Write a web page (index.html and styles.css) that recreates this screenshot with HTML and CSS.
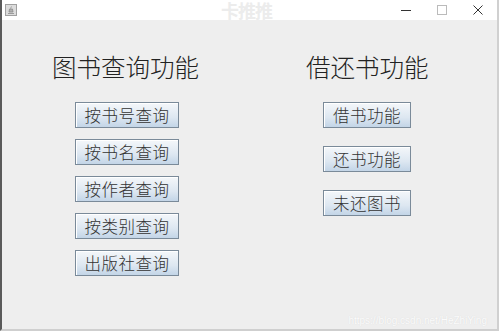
FILE: index.html
```html
<!DOCTYPE html>
<html lang="zh-CN">
<head>
    <meta charset="UTF-8">
    <title>图书管理</title>
    <link rel="stylesheet" href="styles.css">
</head>
<body>
    <div class="window">
        <!-- Title bar -->
        <div class="titlebar">
            <span class="app-icon">
                <svg width="12" height="12" viewBox="0 0 12 12">
                    <rect x="0.5" y="0.5" width="11" height="11" fill="#dcdcdc" stroke="#a0a0a0"/>
                    <path d="M3 9.5h6M4 8h4l-0.5-3h-3z" stroke="#8a8a8a" fill="#b0b0b0" stroke-width="0.8"/>
                    <path d="M5.5 4.5c0-1 1-1 1-2" stroke="#8a8a8a" fill="none" stroke-width="0.8"/>
                </svg>
            </span>
            <span class="mark">卡推推</span>
            <div class="controls">
                <span class="ctl">
                    <svg width="10" height="10" viewBox="0 0 10 10"><path d="M0 5.5h10" stroke="#333" stroke-width="1"/></svg>
                </span>
                <span class="ctl">
                    <svg width="10" height="10" viewBox="0 0 10 10"><rect x="0.5" y="0.5" width="9" height="9" fill="none" stroke="#bbb"/></svg>
                </span>
                <span class="ctl">
                    <svg width="10" height="10" viewBox="0 0 10 10"><path d="M0.5 0.5l9 9M9.5 0.5l-9 9" stroke="#333" stroke-width="1"/></svg>
                </span>
            </div>
        </div>

        <!-- Content -->
        <div class="content">
            <section class="panel panel-query">
                <h2>图书查询功能</h2>
                <div class="btn-list">
                    <button class="btn">按书号查询</button>
                    <button class="btn">按书名查询</button>
                    <button class="btn">按作者查询</button>
                    <button class="btn">按类别查询</button>
                    <button class="btn">出版社查询</button>
                </div>
            </section>
            <section class="panel panel-borrow">
                <h2>借还书功能</h2>
                <div class="btn-list">
                    <button class="btn">借书功能</button>
                    <button class="btn">还书功能</button>
                    <button class="btn">未还图书</button>
                </div>
            </section>
            <span class="url-mark">https://blog.csdn.net/HeZhiYing</span>
        </div>
    </div>
</body>
</html>
```

FILE: styles.css
```css
* {
    margin: 0;
    padding: 0;
    box-sizing: border-box;
}
body {
    font-family: "Noto Sans CJK SC", "Noto Sans", sans-serif;
    background-color: #eeeeee;
    width: 499px;
    height: 331px;
    overflow: hidden;
}

.window {
    width: 499px;
    height: 331px;
    display: flex;
    flex-direction: column;
    border-left: 2px solid #5a5a5a;
    border-right: 2px solid #d0d0d0;
    border-bottom: 2px solid #cfcfcf;
    background-color: #eeeeee;
}

/* Title bar */
.titlebar {
    height: 20px;
    background-color: #ffffff;
    display: flex;
    align-items: center;
    position: relative;
}
.app-icon {
    display: flex;
    margin-left: 3px;
}
.mark {
    position: absolute;
    left: 219px;
    top: 1px;
    font-size: 18px;
    line-height: 18px;
    font-weight: 700;
    color: #ececec;
    letter-spacing: -1px;
}
.controls {
    margin-left: auto;
    display: flex;
    gap: 26px;
    margin-right: 14px;
}
.ctl {
    display: flex;
    width: 10px;
    height: 10px;
}

/* Content */
.content {
    flex: 1;
    display: grid;
    grid-template-columns: 304px 1fr;
    position: relative;
}
.panel h2 {
    font-size: 24.5px;
    font-weight: 300;
    line-height: 30px;
    color: #222;
    margin-top: 32px;
}
.panel-query {
    padding-left: 50px;
}

.btn-list {
    display: flex;
    flex-direction: column;
}
.panel-query .btn-list {
    margin-top: 20px;
    margin-left: 23px;
    gap: 11px;
}
.panel-borrow .btn-list {
    margin-top: 20px;
    margin-left: 17px;
    gap: 18px;
}

.btn {
    height: 26px;
    font-family: "Noto Sans CJK SC", sans-serif;
    font-size: 16.5px;
    font-weight: 300;
    color: #333;
    border: 1px solid #7a8a99;
    box-shadow: inset 1px 1px 0 #ffffff;
    background: linear-gradient(#f4f7fa, #dde7f1 60%, #c3d5e7);
    line-height: 24px;
    letter-spacing: 0.5px;
}
.panel-query .btn {
    width: 104px;
}
.panel-borrow .btn {
    width: 88px;
}

.url-mark {
    position: absolute;
    right: 10px;
    bottom: 3px;
    font-family: "Liberation Sans", sans-serif;
    font-size: 10px;
    color: #fbfbfb;
    text-shadow: 0 0 1px #d6d6d6;
}
```
